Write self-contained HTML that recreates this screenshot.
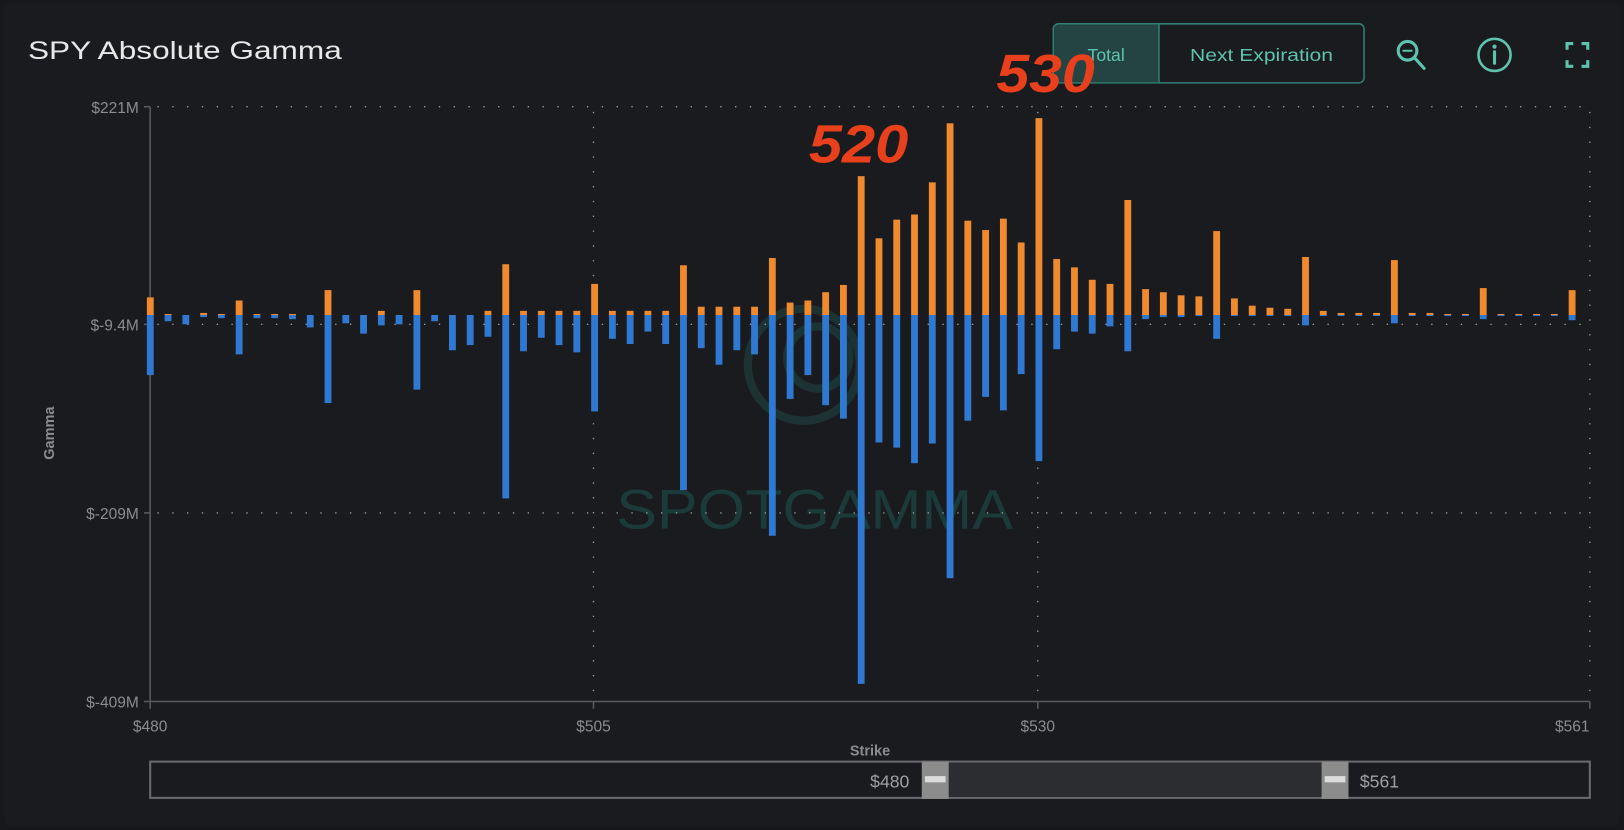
<!DOCTYPE html>
<html><head><meta charset="utf-8">
<style>
html,body{margin:0;padding:0;background:#17181c;}
body{width:1624px;height:830px;overflow:hidden;}
svg{display:block;}
</style></head>
<body>
<svg id="s" width="1624" height="830" viewBox="0 0 1568 801" preserveAspectRatio="none" xmlns="http://www.w3.org/2000/svg" font-family="Liberation Sans, sans-serif">
<rect x="0" y="0" width="1568" height="801" fill="#17181c"/>
<rect x="4" y="3" width="1560" height="795" rx="8" fill="#1a1b1f"/>
<text x="27" y="57" font-size="24" fill="#e8e8e8" textLength="303" lengthAdjust="spacingAndGlyphs">SPY Absolute Gamma</text>

<!-- watermark -->
<g opacity="0.5" fill="none" stroke="#1e4a48" stroke-width="8">
<circle cx="776" cy="352" r="54"/>
<circle cx="790" cy="345" r="30"/>
</g>
<text x="595" y="510" font-size="54" fill="#1b3b3a" textLength="383" lengthAdjust="spacingAndGlyphs">SPOTGAMMA</text>

<!-- grid -->
<g stroke="#9a9a9a" stroke-width="1.3" stroke-dasharray="1.3 13" fill="none">
<line x1="152" y1="103" x2="1535" y2="103"/>
<line x1="152" y1="313" x2="1535" y2="313"/>
<line x1="152" y1="495" x2="1535" y2="495"/>
<line x1="573" y1="108" x2="573" y2="677"/>
<line x1="1002" y1="108" x2="1002" y2="677"/>
<line x1="1535" y1="108" x2="1535" y2="677"/>
</g>
<g stroke="#5a5a5e" stroke-width="1.5">
<line x1="145" y1="103" x2="145" y2="684"/>
<line x1="145" y1="677" x2="1535" y2="677"/>
<line x1="139" y1="103" x2="145" y2="103"/>
<line x1="139" y1="313" x2="145" y2="313"/>
<line x1="139" y1="495" x2="145" y2="495"/>
<line x1="139" y1="677" x2="145" y2="677"/>
<line x1="573" y1="677" x2="573" y2="684"/>
<line x1="1002" y1="677" x2="1002" y2="684"/>
<line x1="1535" y1="677" x2="1535" y2="684"/>
</g>
<g font-size="15" fill="#8c8c90" text-anchor="end">
<text x="134" y="109">$221M</text>
<text x="134" y="319">$-9.4M</text>
<text x="134" y="501">$-209M</text>
<text x="134" y="683">$-409M</text>
</g>
<g font-size="15" fill="#8c8c90" text-anchor="middle">
<text x="145" y="706">$480</text>
<text x="573" y="706">$505</text>
<text x="1002" y="706">$530</text>
<text x="1518" y="706">$561</text>
</g>
<text x="840" y="729" font-size="14" font-weight="bold" fill="#8c8c90" text-anchor="middle">Strike</text>
<text transform="translate(52,418) rotate(-90)" font-size="14" font-weight="bold" fill="#8c8c90" text-anchor="middle">Gamma</text>

<g id="bars"></g>

<!-- slider -->
<rect x="145" y="735" width="1390" height="35" fill="none" stroke="#6a6a6e" stroke-width="2"/>
<rect x="916" y="736" width="360" height="33" fill="#2c2d31"/>
<rect x="890" y="735" width="26" height="36" fill="#8c8c8c"/>
<rect x="893" y="749" width="20" height="6" fill="#dcdcdc"/>
<rect x="1276" y="735" width="26" height="36" fill="#8c8c8c"/>
<rect x="1279" y="749" width="20" height="6" fill="#dcdcdc"/>
<text x="878" y="760" font-size="17" fill="#a0a0a4" text-anchor="end">$480</text>
<text x="1313" y="760" font-size="17" fill="#a0a0a4">$561</text>

<!-- toggle -->
<rect x="1017" y="23" width="300" height="57" rx="5" fill="#1a1b1f" stroke="#2f7f73" stroke-width="1.5"/>
<path d="M1022 23.75 H1119 V79.25 H1022 A4.5 4.5 0 0 1 1017.75 75 V28 A4.5 4.5 0 0 1 1022 23.75Z" fill="#244443"/>
<line x1="1119" y1="23" x2="1119" y2="80" stroke="#2f7f73" stroke-width="1.5"/>
<text x="1068" y="59" font-size="17" fill="#5ec3ae" text-anchor="middle">Total</text>
<text x="1218" y="59" font-size="17" fill="#5ec3ae" text-anchor="middle" textLength="138" lengthAdjust="spacingAndGlyphs">Next Expiration</text>

<!-- icons -->
<g stroke="#5ec3ae" stroke-width="3" fill="none" stroke-linecap="round">
<circle cx="1359" cy="49" r="9"/>
<line x1="1366" y1="56" x2="1375" y2="66"/>
<line x1="1355" y1="49" x2="1363" y2="49" stroke-width="2"/>
<circle cx="1443" cy="53" r="15.5" stroke-width="2.5"/>
<line x1="1443" y1="50" x2="1443" y2="61" stroke-width="3"/>
<path d="M1513 48 V42 H1519 M1527 42 H1533 V48 M1533 58 V64 H1527 M1519 64 H1513 V58" stroke-width="3" stroke-linecap="butt"/>
</g>
<circle cx="1443" cy="45" r="2" fill="#5ec3ae"/>

<!-- annotations -->
<text x="962" y="89" font-size="52" font-weight="bold" font-style="italic" fill="#e8401c" textLength="95" lengthAdjust="spacingAndGlyphs">530</text>
<text x="781" y="157" font-size="52" font-weight="bold" font-style="italic" fill="#e8401c" textLength="96" lengthAdjust="spacingAndGlyphs">520</text>
</svg>
<script>
var d=[[480,287,362],[481,303,310],[482,304,313],[483,302,306],[484,303,307],[485,290,342],[486,303,307],[487,303,307],[488,303,308],[489,304,316],[490,280,389],[491,304,312],[492,304,322],[493,300,314],[494,304,313],[495,280,376],[496,304,310],[497,304,338],[498,304,333],[499,300,325],[500,255,481],[501,300,339],[502,300,326],[503,300,333],[504,300,340],[505,274,397],[506,300,327],[507,300,332],[508,300,320],[509,300,332],[510,256,473],[511,296,336],[512,296,352],[513,296,338],[514,296,342],[515,249,517],[516,292,385],[517,290,362],[518,282,391],[519,275,404],[520,170,660],[521,230,427],[522,212,432],[523,207,447],[524,176,428],[525,119,558],[526,213,406],[527,222,383],[528,211,396],[529,234,361],[530,114,445],[531,250,337],[532,258,320],[533,270,322],[534,274,315],[535,193,339],[536,279,308],[537,282,306],[538,285,306],[539,286,305],[540,223,327],[541,288,305],[542,295,305],[543,297,305],[544,298,305],[545,248,314],[546,300,305],[547,302,305],[548,302,305],[549,302,305],[550,251,312],[551,302,305],[552,302,305],[553,303,305],[554,303,305],[555,278,308],[556,303,305],[557,303,305],[558,303,305],[559,303,305],[560,280,309]];
var g=document.getElementById('bars'),h='';
d.forEach(function(b){var x=145+(b[0]-480)*17.16-3.2;
h+='<rect x="'+x+'" y="'+b[1]+'" width="6.6" height="'+(304-b[1])+'" fill="#f08a2e"/>';
h+='<rect x="'+x+'" y="304" width="6.6" height="'+(b[2]-304)+'" fill="#3079d3"/>';});
g.innerHTML=h;
</script>
</body></html>
